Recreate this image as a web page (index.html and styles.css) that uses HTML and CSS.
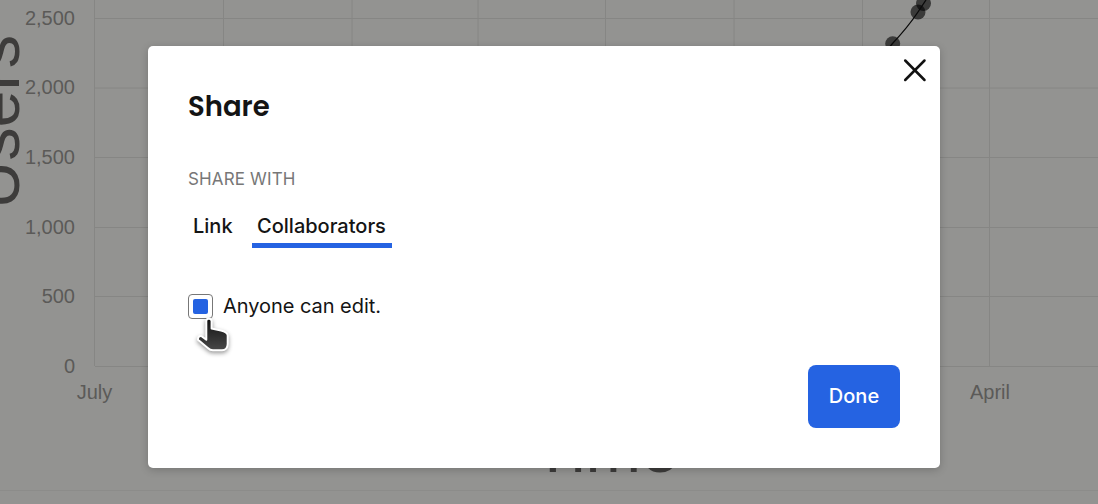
FILE: index.html
```html
<!DOCTYPE html>
<html lang="en">
  <head>
    <meta charset="utf-8" />
    <title>Share</title>
    <meta name="viewport" content="width=device-width, initial-scale=1.0" />
    <link rel="stylesheet" href="styles.css">
  </head>
  <body>
    <svg class="chart" width="1098" height="504" viewBox="0 0 1098 504">
      <g class="grid">
        <path d="M94.5 0V366M223.5 0V366M352 0V366M478 0V366M605.5 0V366M734 0V366M862.5 0V366M989.5 0V366" />
        <path d="M95 18.5H1098M95 88H1098M95 157.5H1098M95 227.5H1098M95 296.5H1098M95 366.5H1098" />
        <path class="divider" d="M0 490.5H1098" />
      </g>
      <g class="ticks-y">
        <text x="75" y="25">2,500</text>
        <text x="75" y="94">2,000</text>
        <text x="75" y="164">1,500</text>
        <text x="75" y="234">1,000</text>
        <text x="75" y="303">500</text>
        <text x="75" y="373">0</text>
      </g>
      <g class="ticks-x">
        <text x="94.5" y="399">July</text>
        <text x="990" y="399">April</text>
      </g>
      <text class="axis-title" transform="translate(19 209) rotate(-90)">Users</text>
      <text class="axis-title" x="532.5" y="472">Time</text>
      <g class="points">
        <circle cx="892.7" cy="43.8" r="7.5" />
        <circle cx="918" cy="12" r="7.5" />
        <circle cx="923.5" cy="3.5" r="7.5" />
      </g>
      <path class="line" d="M888 49L892.5 43.5Q908 27 918 12L926 0" />
    </svg>

    <div class="overlay">
      <div class="modal" role="dialog">
        <button class="close" aria-label="Close">
          <svg width="24" height="24" viewBox="0 0 24 24">
            <path d="M2.2 2.5L21.5 22M21.5 2.5L2.2 22" />
          </svg>
        </button>
        <h1>Share</h1>
        <h2>Share with</h2>
        <div class="tabs">
          <button class="tab">Link</button>
          <button class="tab active">Collaborators</button>
        </div>
        <label class="option">
          <span class="checkbox"></span>
          Anyone can edit.
        </label>
        <button class="done">Done</button>
      </div>
    </div>

    <svg class="cursor" width="40" height="44" viewBox="0 0 40 44">
      <defs>
        <linearGradient id="hand" x1="0" y1="0" x2="0" y2="1">
          <stop offset="0" stop-color="#111" />
          <stop offset="1" stop-color="#484848" />
        </linearGradient>
      </defs>
      <path d="M15.3 6Q15.3 3.8 17.8 3.8T20.6 6V13.5L30 15.5Q36.5 17.2 36.7 20.5V29Q36.5 35.3 31 35.3H22Q19 35.3 16.8 33L7 24.8Q6.8 20.6 10.6 21.2L15.3 24.8Z" />
    </svg>
  </body>
</html>
```

FILE: styles.css
```css
body {
  margin: 0;
  height: 504px;
  overflow: hidden;
  background: #939391;
  color: #141414;
  font-family: Inter, sans-serif;
  font-size: 20px;
}

button {
  border: none;
  background: none;
  color: inherit;
  font: inherit;
  padding: 0;
}

.chart {
  display: block;
  font-family: "Liberation Sans", Arial, sans-serif;
}

.grid path {
  fill: none;
  stroke: #868684;
}

.grid .divider {
  stroke: #8c8c8a;
}

.ticks-y,
.ticks-x {
  fill: #5b5a58;
  font-size: 20px;
}

.ticks-y {
  text-anchor: end;
}

.ticks-x {
  text-anchor: middle;
}

.axis-title {
  fill: #3d3c3b;
  font-size: 66.7px;
}

.points {
  fill: #000;
  fill-opacity: 0.6;
}

.line {
  fill: none;
  stroke: #0a0a0a;
  stroke-width: 1.3;
}

.overlay {
  position: absolute;
  top: 46px;
  left: 148px;
}

.modal {
  box-sizing: border-box;
  position: relative;
  display: flex;
  flex-direction: column;
  align-items: flex-start;
  width: 792px;
  height: 422px;
  padding: 40px;
  background: #fff;
  border-radius: 5px;
  box-shadow: 0 2px 8px rgba(0, 0, 0, 0.2);
}

.close {
  position: absolute;
  top: 12px;
  right: 13px;
  height: 24px;
}

.close svg {
  display: block;
  fill: none;
  stroke: #111;
  stroke-width: 2.5;
  stroke-linecap: round;
}

h1 {
  margin: 0;
  font-family: Poppins, Inter, sans-serif;
  font-size: 27.5px;
  font-weight: 600;
  line-height: 42px;
}

h2 {
  margin: 39px 0 0;
  color: #777;
  font-size: 17px;
  font-weight: 400;
  letter-spacing: 0.15px;
  line-height: 24px;
  text-transform: uppercase;
}

.tabs {
  display: flex;
  gap: 14.5px;
  margin-top: 18px;
}

.tab {
  height: 39px;
  padding: 0 5px;
  border-bottom: 5px solid transparent;
  font-weight: 500;
  line-height: 34px;
}

.tab.active {
  padding-right: 6px;
  border-color: #2563e2;
}

.option {
  display: flex;
  align-items: center;
  gap: 10px;
  margin-top: 46px;
  letter-spacing: -0.04px;
  line-height: 25px;
}

.checkbox {
  box-sizing: border-box;
  width: 25px;
  height: 25px;
  padding: 4px;
  border: 1px solid #777;
  border-radius: 4px;
}

.checkbox::before {
  content: "";
  display: block;
  height: 15px;
  border-radius: 2px;
  background: #2563e2;
}

.done {
  align-self: flex-end;
  width: 92px;
  height: 63px;
  margin-top: auto;
  padding-bottom: 2px;
  border-radius: 8px;
  background: #2563e2;
  color: #fff;
  font-weight: 500;
}

.cursor {
  position: absolute;
  top: 315px;
  left: 191px;
  filter: drop-shadow(0 2px 2px rgba(0, 0, 0, 0.4));
}

.cursor path {
  fill: url(#hand);
  stroke: #fff;
  stroke-width: 2;
  stroke-linejoin: round;
}
```
